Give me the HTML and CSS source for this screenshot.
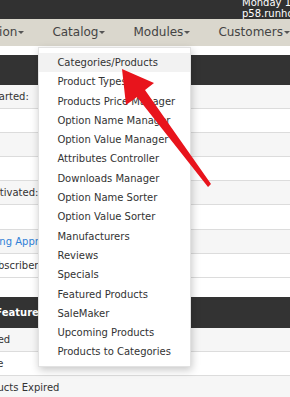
FILE: index.html
```html
<!DOCTYPE html>
<html lang="en">

<head>
    <meta charset="UTF-8">
    <meta name="viewport" content="width=device-width, initial-scale=1.0">
    <title>Admin Home</title>
    <link rel="stylesheet" href="styles.css">
</head>

<body>
    <div class="topbar">
        <div class="clock">Monday 12 August 2024 09:14:25<br>p58.runhosting.com</div>
    </div>

    <nav class="menu">
        <ul class="menu-list">
            <li class="menu-item">Configuration<span class="caret"></span></li>
            <li class="menu-item open">Catalog<span class="caret"></span>
                <ul class="dropdown">
                    <li class="active">Categories/Products</li>
                    <li>Product Types</li>
                    <li>Products Price Manager</li>
                    <li>Option Name Manager</li>
                    <li>Option Value Manager</li>
                    <li>Attributes Controller</li>
                    <li>Downloads Manager</li>
                    <li>Option Name Sorter</li>
                    <li>Option Value Sorter</li>
                    <li>Manufacturers</li>
                    <li>Reviews</li>
                    <li>Specials</li>
                    <li>Featured Products</li>
                    <li>SaleMaker</li>
                    <li>Upcoming Products</li>
                    <li>Products to Categories</li>
                </ul>
            </li>
            <li class="menu-item">Modules<span class="caret"></span></li>
            <li class="menu-item">Customers<span class="caret"></span></li>
            <li class="menu-item">Locations / Taxes<span class="caret"></span></li>
        </ul>
    </nav>

    <main class="dash">
        <div class="box">
            <div class="box-head">Statistics</div>
            <div class="row">Hit Counter Started:</div>
            <div class="row">Hit Counter:</div>
            <div class="row">Customers:</div>
            <div class="row">Products:</div>
            <div class="row">Products Deactivated:</div>
            <div class="row">Reviews:</div>
            <div class="row"><a class="link" href="#">Reviews Pending Approval:</a></div>
            <div class="row">Newsletter Subscribers:</div>
        </div>

        <div class="box second">
            <div class="box-head">Specials &amp; Featured</div>
            <div class="row">Specials Expired</div>
            <div class="row">Specials Active</div>
            <div class="row">Featured Products Expired</div>
        </div>
    </main>

    <svg class="arrow" width="290" height="397" viewBox="0 0 290 397">
        <polygon points="122,69 154,83 145,90 211,184 208,187 137,97 126,105" fill="#e8141c" />
    </svg>
</body>

</html>
```

FILE: styles.css
```css
* {
    box-sizing: border-box;
}

body {
    margin: 0;
    width: 290px;
    height: 397px;
    overflow: hidden;
    position: relative;
    background-color: white;
    font-family: "DejaVu Sans", Verdana, sans-serif;
    color: #333;
}

.topbar {
    height: 19px;
    background-color: #313131;
    display: flex;
    align-items: flex-end;
    overflow: hidden;
}

.clock {
    margin-left: 242px;
    font-size: 10px;
    line-height: 11px;
    color: white;
    white-space: nowrap;
}

.menu {
    height: 27px;
    background-color: #dad7cd;
    position: relative;
    z-index: 2;
}

.menu-list {
    list-style: none;
    margin: 0;
    margin-left: -78px;
    padding: 0;
    display: flex;
    white-space: nowrap;
}

.menu-item {
    position: relative;
    padding: 0 14px;
    line-height: 27px;
    font-size: 12px;
    color: #444;
}

.caret {
    display: inline-block;
    margin-left: 1px;
    vertical-align: middle;
    border-left: 3px solid transparent;
    border-right: 3px solid transparent;
    border-top: 3px solid #555;
}

.dropdown {
    position: absolute;
    top: calc(100% + 1px);
    left: 0;
    width: 153px;
    margin: 0;
    padding: 5px 0 4px;
    list-style: none;
    background-color: white;
    border: 1px solid #e2e2e2;
    box-shadow: 1px 3px 8px rgba(0, 0, 0, 0.22);
}

.dropdown li {
    padding-left: 18px;
    line-height: 19.3px;
    font-size: 10px;
    color: #333;
}

.dropdown .active {
    background-color: #f2f2f2;
}

.dash {
    margin-left: -77px;
    padding-top: 9px;
    width: 400px;
}

.box-head {
    height: 30px;
    padding-left: 5px;
    background-color: #333;
    color: white;
    font-size: 10px;
    font-weight: bold;
    display: flex;
    align-items: center;
    white-space: nowrap;
}

.row {
    height: 24.1px;
    padding-left: 5px;
    border-bottom: 1px solid #dcdcdc;
    display: flex;
    align-items: center;
    font-size: 10px;
    white-space: nowrap;
}

.row:nth-child(even) {
    background-color: #f6f6f6;
}

.link {
    color: #2f7fd6;
    text-decoration: none;
}

.second {
    margin-top: 19px;
}

.second .box-head {
    height: 31px;
    padding-left: 10px;
}

.arrow {
    position: absolute;
    left: 0;
    top: 0;
    z-index: 3;
}
```
